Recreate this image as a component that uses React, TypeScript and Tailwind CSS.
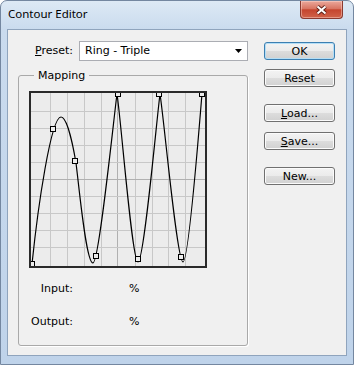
import React from "react";

// curve + handles, coordinates inside the 178x177 graph box
const CURVE =
  "M3,173 C9,115 22,26 32,26 C38,26 44,54 47,72 C50,95 57,172 64,172 C70,172 85,25 88,3 C92,28 103,171 109,171 C115,171 128,25 131,3 C135,28 148,171 154,171 C160,171 171,25 173,3";

const HANDLES: [number, number][] = [
  [3, 173],
  [24.3, 38.3],
  [46.3, 70],
  [67.3, 165.3],
  [88.7, 3],
  [109.3, 168],
  [130.3, 3],
  [152.3, 166],
  [173.3, 3],
];

const GRID_X = [21, 38, 55, 72, 88, 106, 123, 139, 156];
const GRID_Y = [20, 37, 54, 71, 88, 105, 122, 139, 156];

function ContourGraph() {
  return (
    <svg width="178" height="177" viewBox="0 0 178 177" className="block">
      <rect x="1" y="1" width="176" height="175" fill="#ececec" />
      {GRID_X.map((x, i) => (
        <line
          key={"vx" + x}
          x1={x + 0.5}
          x2={x + 0.5}
          y1="2"
          y2="175"
          stroke={i === 4 ? "#b0b0b0" : "#c8c8c8"}
          strokeWidth="1"
          shapeRendering="crispEdges"
        />
      ))}
      {GRID_Y.map((y, i) => (
        <line
          key={"hy" + y}
          x1="2"
          x2="176"
          y1={y + 0.5}
          y2={y + 0.5}
          stroke={i === 4 ? "#b0b0b0" : "#c8c8c8"}
          strokeWidth="1"
          shapeRendering="crispEdges"
        />
      ))}
      <path d={CURVE} fill="none" stroke="#000" strokeWidth="1.2" />
      {HANDLES.map(([x, y]) => (
        <rect
          key={x + "-" + y}
          x={Math.round(x) - 2.5}
          y={Math.round(y) - 2.5}
          width="5"
          height="5"
          fill="#ececec"
          stroke="#000"
          strokeWidth="1"
        />
      ))}
      <rect x="1" y="1" width="176" height="175" fill="none" stroke="#2a2a2a" strokeWidth="2" />
    </svg>
  );
}

function WinButton({
  children,
  isDefault = false,
  className = "",
}: {
  children: React.ReactNode;
  isDefault?: boolean;
  className?: string;
}) {
  const base =
    "flex h-[18px] w-[71px] items-center justify-center rounded-[3px] border text-[11px] leading-none text-black bg-[linear-gradient(#f3f3f3_0%,#ebebeb_50%,#dddddd_50%,#d1d1d1_100%)]";
  return (
    <button
      type="button"
      className={
        isDefault
          ? `${base} border-[#3c7fb1] shadow-[inset_0_0_0_1px_#b4def6] ${className}`
          : `${base} border-[#707070] shadow-[inset_0_0_0_1px_#fbfbfb] ${className}`
      }
    >
      {children}
    </button>
  );
}

export default function App() {
  return (
    <div className="flex h-[365px] w-[354px] flex-col overflow-hidden rounded-t-[7px] border border-[#7487a0] bg-[linear-gradient(180deg,#dde9f5_0px,#cadbee_28px,#bfd3ea_100%)] px-[6px] pb-[8px] font-['DejaVu_Sans',sans-serif] text-[11px] text-black">
      {/* title bar */}
      <div className="flex h-[28px] shrink-0 items-start">
        <span className="ml-[1px] mt-[5px] font-['Noto_Sans',sans-serif] text-[11.5px] leading-[16px] text-black">
          Contour Editor
        </span>
        <div className="ml-auto mr-[4px] flex h-[18px] w-[43px] items-center justify-center rounded-b-[4px] border border-t-0 border-[#8a3a30] bg-[linear-gradient(#eba99c_0%,#d87562_45%,#c5452e_52%,#d0634a_100%)] shadow-[inset_0_0_0_1px_rgba(255,220,210,0.45)]">
          <svg width="11" height="10" viewBox="0 0 11 10">
            <path d="M1.5,1.5 L9.5,8.5 M9.5,1.5 L1.5,8.5" stroke="#5b2018" strokeWidth="3.8" />
            <path d="M1.5,1.5 L9.5,8.5 M9.5,1.5 L1.5,8.5" stroke="#fff" strokeWidth="2" />
          </svg>
        </div>
      </div>

      {/* client area */}
      <div className="flex flex-1 border border-[#8fa4bd] bg-[#f0f0f0] pl-[10px] pt-[11px]">
        <div className="w-[230px]">
          <div className="flex h-[20px] items-center">
            <span className="ml-[17px]">
              <span className="underline">P</span>reset:
            </span>
            <div className="ml-auto flex h-[20px] w-[169px] items-center border border-[#abadb3] bg-white pl-[5px]">
              <span>Ring - Triple</span>
              <svg className="ml-auto mr-[5px]" width="7" height="4" viewBox="0 0 7 4">
                <path d="M0,0 H7 L3.5,4 Z" fill="#000" />
              </svg>
            </div>
          </div>

          <div className="relative mt-[14px] h-[271px] rounded-[3px] border border-[#a9a9a9] pl-[10px] pt-[15px] shadow-[1px_1px_0_#fff]">
            <span className="absolute left-[15px] top-[-7px] bg-[#f0f0f0] px-[4px] leading-[13px]">
              Mapping
            </span>
            <ContourGraph />
            <div className="mt-[13px] flex h-[16px] items-center">
              <span className="w-[44px] text-right">Input:</span>
              <span className="ml-[56px]">%</span>
            </div>
            <div className="mt-[17px] flex h-[16px] items-center">
              <span className="w-[44px] text-right">Output:</span>
              <span className="ml-[56px]">%</span>
            </div>
          </div>
        </div>

        <div className="ml-[16px] mt-[1px] flex flex-col">
          <WinButton isDefault>OK</WinButton>
          <WinButton className="mt-[9px]">Reset</WinButton>
          <WinButton className="mt-[17px]">
            <span className="underline">L</span>oad...
          </WinButton>
          <WinButton className="mt-[10px]">
            <span className="underline">S</span>ave...
          </WinButton>
          <WinButton className="mt-[17px]">New...</WinButton>
        </div>
      </div>
    </div>
  );
}
